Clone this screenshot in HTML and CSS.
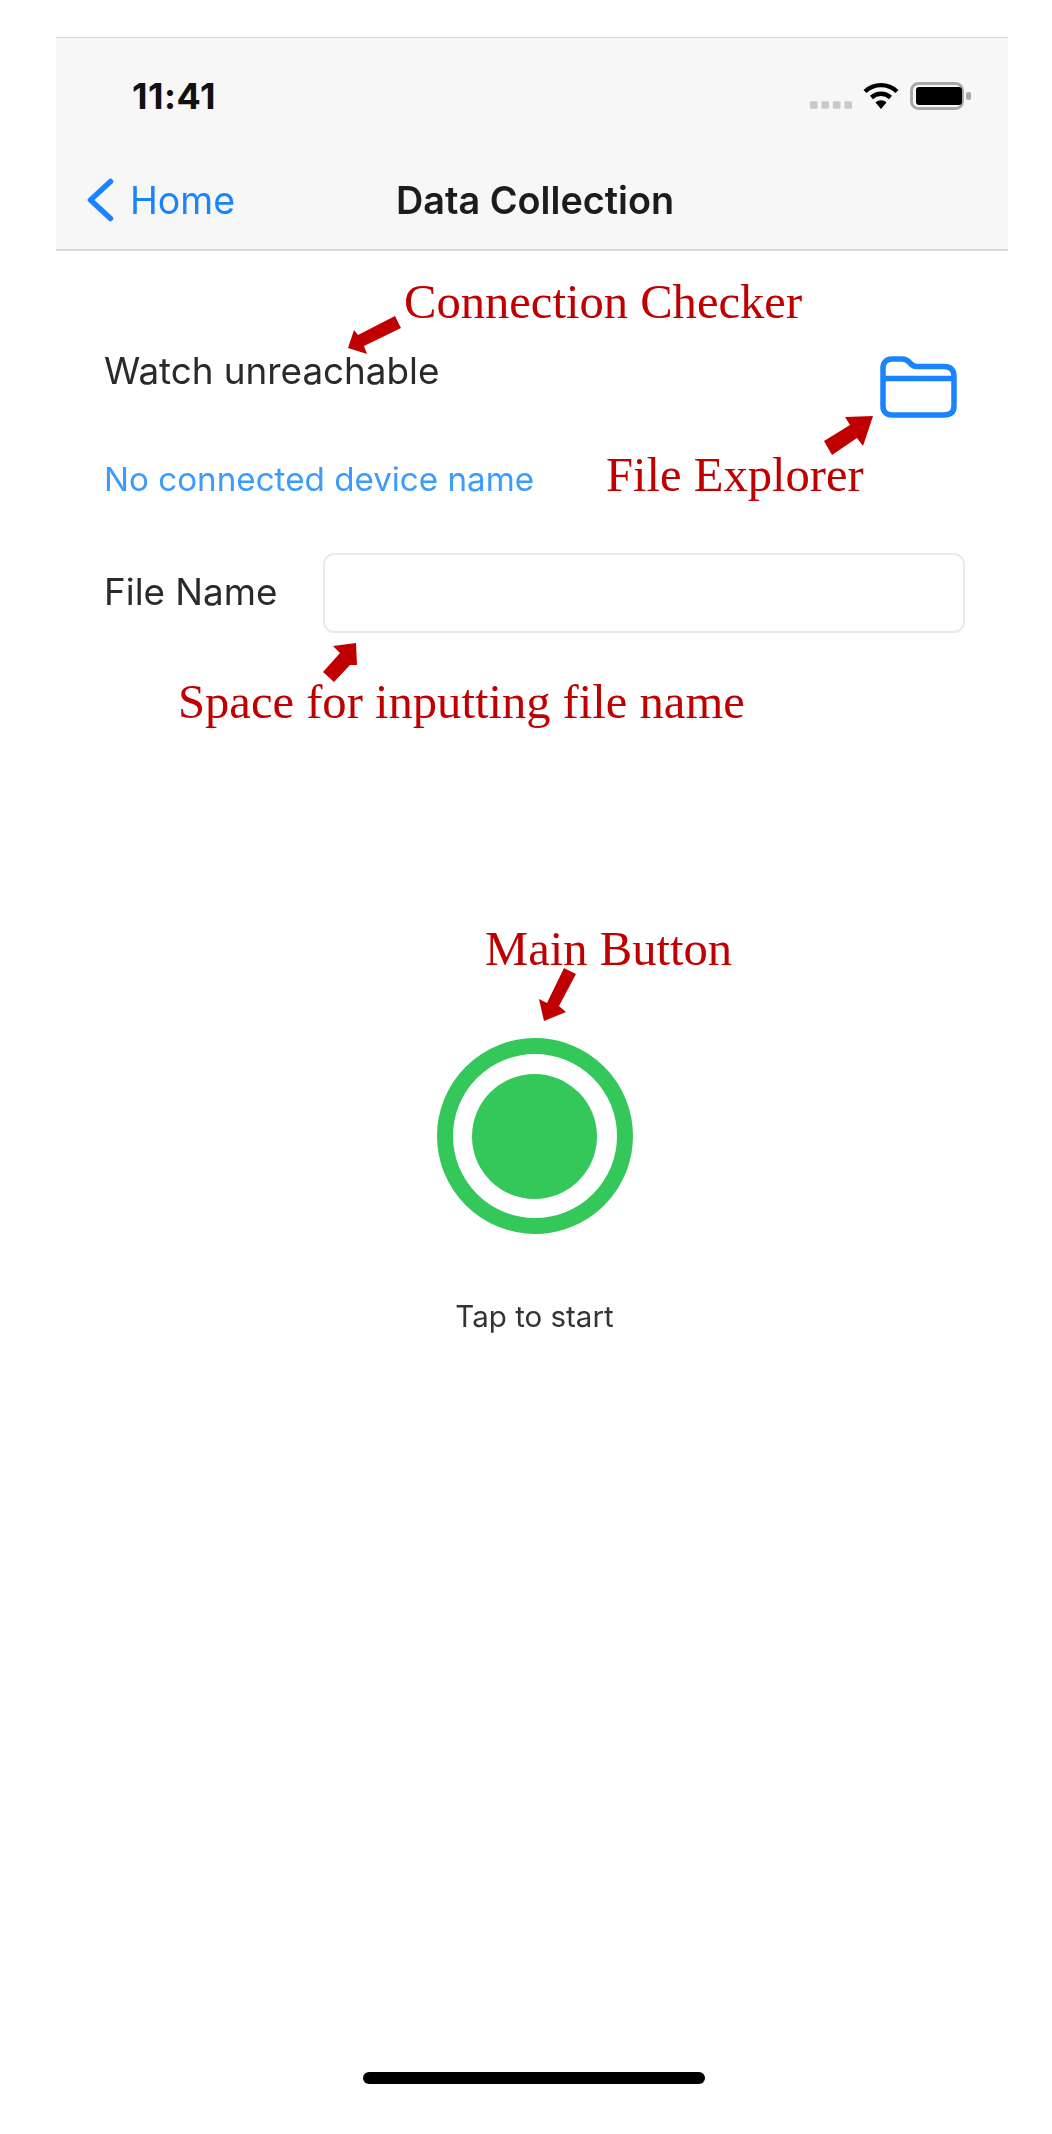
FILE: index.html
```html
<!DOCTYPE html>
<html lang="en">
<head>
  <meta charset="UTF-8">
  <title>Data Collection</title>
  <link rel="stylesheet" href="styles.css">
</head>
<body>

<div class="phone">
  <!-- STATUS + NAV -->
  <header class="top-bar">
    <div class="status-bar">
      <span class="clock">11:41</span>
      <div class="status-icons">
        <svg class="signal" width="42" height="8" viewBox="0 0 44 8"><g fill="#c9c9c9"><rect x="0" width="8" height="8" rx="1.5"/><rect x="12" width="8" height="8" rx="1.5"/><rect x="24" width="8" height="8" rx="1.5"/><rect x="36" width="8" height="8" rx="1.5"/></g></svg>
        <svg class="wifi" width="36" height="27" viewBox="0 0 36 27"><g fill="none" stroke="#000" stroke-width="4.4"><path d="M2 9.5C11 1 25 1 34 9.5"/><path d="M8.5 15.5C14 10.5 22 10.5 27.5 15.5"/></g><path d="M12.5 20.5C15.5 17.6 20.5 17.6 23.5 20.5L18 27Z" fill="#000"/></svg>
        <svg class="battery" width="63" height="28" viewBox="0 0 63 28"><rect x="1.5" y="1.5" width="51" height="25" rx="7" fill="none" stroke="#a9a9a9" stroke-width="3"/><rect x="6" y="5" width="46" height="18" rx="3" fill="#000"/><rect x="56" y="10" width="5" height="8" rx="2" fill="#a9a9a9"/></svg>
      </div>
    </div>
    <nav class="nav-bar">
      <a class="back-link">
        <svg width="28" height="44" viewBox="0 0 28 44"><path d="M24.5 3.5L4.5 22L24.5 40.5" fill="none" stroke="#1a84ff" stroke-width="5.5" stroke-linecap="round" stroke-linejoin="round"/></svg>
        <span>Home</span>
      </a>
      <h1 class="nav-title">Data Collection</h1>
    </nav>
  </header>

  <main class="content">
    <div class="top-row">
      <div class="labels">
        <p class="watch-status">Watch unreachable</p>
        <p class="device-name">No connected device name</p>
      </div>
      <svg class="folder-icon" width="78" height="62" viewBox="0 0 78 62"><path d="M4 12C4 6.500 7.500 3 13 3H23C27 3 29 4.500 31 7C33 9.500 34.500 10.500 38 10.500H65C71.500 10.500 75 14 75 20V50C75 56 71.500 59 65 59H13C7.500 59 4 56 4 50Z" fill="none" stroke="#1a84ff" stroke-width="5.500"/><path d="M4 22.500H75" stroke="#1a84ff" stroke-width="5.500"/></svg>
    </div>
    <div class="file-row">
      <label class="file-label" for="fileName">File Name</label>
      <input class="file-input" id="fileName" type="text">
    </div>
    <div class="main-action">
      <button class="main-button"><span class="main-dot"></span></button>
      <p class="tap-hint">Tap to start</p>
    </div>
  </main>

  <div class="home-indicator"></div>
</div>

<!-- ANNOTATIONS -->
<span class="note note-connection">Connection Checker</span>
<span class="note note-explorer">File Explorer</span>
<span class="note note-space">Space for inputting file name</span>
<span class="note note-main">Main Button</span>

<svg class="arrow-layer" width="1052" height="2134" viewBox="0 0 1052 2134">
  <g fill="#c00000">
    <polygon points="395,316 401,328 364,346 367,354 348,348 354,330 358,335"/>
    <polygon points="824,441 832,455 857,438 863,446 873,416 845,417 850,425"/>
    <polygon points="356,643 333,646 340,653 323,672 334,682 350,665 357,665"/>
    <polygon points="564,968 576,974 559,1006 566,1012 544,1021 539,999 547,1003"/>
  </g>
</svg>

</body>
</html>
```

FILE: styles.css
```css
* {
  box-sizing: border-box;
}
body {
  margin: 0;
  background: #fff;
  font-family: Inter, "Liberation Sans", Arial, sans-serif;
  color: #222;
}
.phone {
  width: 952px;
  height: 2134px;
  margin-left: 56px;
  padding-top: 37px;
  display: flex;
  flex-direction: column;
  filter: blur(.5px);
}
.top-bar {
  height: 214px;
  background: #f7f7f7;
  border-top: 1px solid #d8d8d8;
  border-bottom: 2px solid #d9d9d9;
}
.status-bar {
  height: 113px;
  padding: 2px 35px 0 76px;
  display: flex;
  align-items: center;
  justify-content: space-between;
}
.clock {
  font-size: 36px;
  font-weight: 700;
  letter-spacing: .5px;
  color: #111;
}
.status-icons {
  display: flex;
  align-items: center;
  gap: 11px;
}
.signal {
  margin-top: 19px;
}
.nav-bar {
  position: relative;
  display: flex;
  align-items: center;
  height: 98px;
  padding-left: 30px;
}
.back-link {
  display: flex;
  align-items: center;
  gap: 16px;
  font-size: 37.500px;
  color: #1a84ff;
}
.nav-title {
  position: absolute;
  left: 340px;
  margin: 0;
  font-size: 37.800px;
  font-weight: 600;
  color: #1c1c1c;
}
.content {
  flex: 1;
  padding: 0 43px 0 48px;
}
.top-row {
  display: flex;
  justify-content: space-between;
  padding: 98px 8px 0 0;
}
.labels p {
  margin: 0;
}
.watch-status {
  font-size: 36.800px;
  line-height: 44px;
  color: #2a2a2a;
}
.device-name {
  margin-top: 66px !important;
  font-size: 33.200px;
  line-height: 40px;
  color: #3b9bff;
}
.folder-icon {
  margin-top: 7px;
}
.file-row {
  display: flex;
  align-items: center;
  gap: 46px;
  margin-top: 54px;
}
.file-label {
  padding-bottom: 3px;
  font-size: 36.800px;
  color: #2a2a2a;
}
.file-input {
  flex: 1;
  height: 80px;
  border: 2px solid #e9e9e9;
  border-radius: 11px;
  background: #fff;
}
.main-action {
  display: flex;
  flex-direction: column;
  align-items: center;
  margin-top: 405px;
}
.main-button {
  width: 196px;
  height: 196px;
  padding: 0;
  border: 16px solid #34c75a;
  border-radius: 50%;
  background: #fff;
  display: flex;
  align-items: center;
  justify-content: center;
}
.main-dot {
  width: 125px;
  height: 125px;
  border-radius: 50%;
  background: #34c75a;
}
.tap-hint {
  margin: 64px 0 0;
  font-size: 29.500px;
  color: #333;
}
.home-indicator {
  width: 342px;
  height: 12px;
  margin: 0 0 50px 307px;
  border-radius: 6px;
  background: #000;
}
/* red labels drawn over the screenshot */
.note {
  position: absolute;
  font-family: "Liberation Serif", "Times New Roman", serif;
  font-size: 48.600px;
  line-height: 52px;
  color: #c00000;
  white-space: nowrap;
  filter: blur(.4px);
}
.note-connection {
  left: 404px;
  top: 276px;
}
.note-explorer {
  left: 606px;
  top: 449px;
}
.note-space {
  left: 178px;
  top: 676px;
}
.note-main {
  left: 485px;
  top: 923px;
}
.arrow-layer {
  position: absolute;
  left: 0;
  top: 0;
  pointer-events: none;
}
```
